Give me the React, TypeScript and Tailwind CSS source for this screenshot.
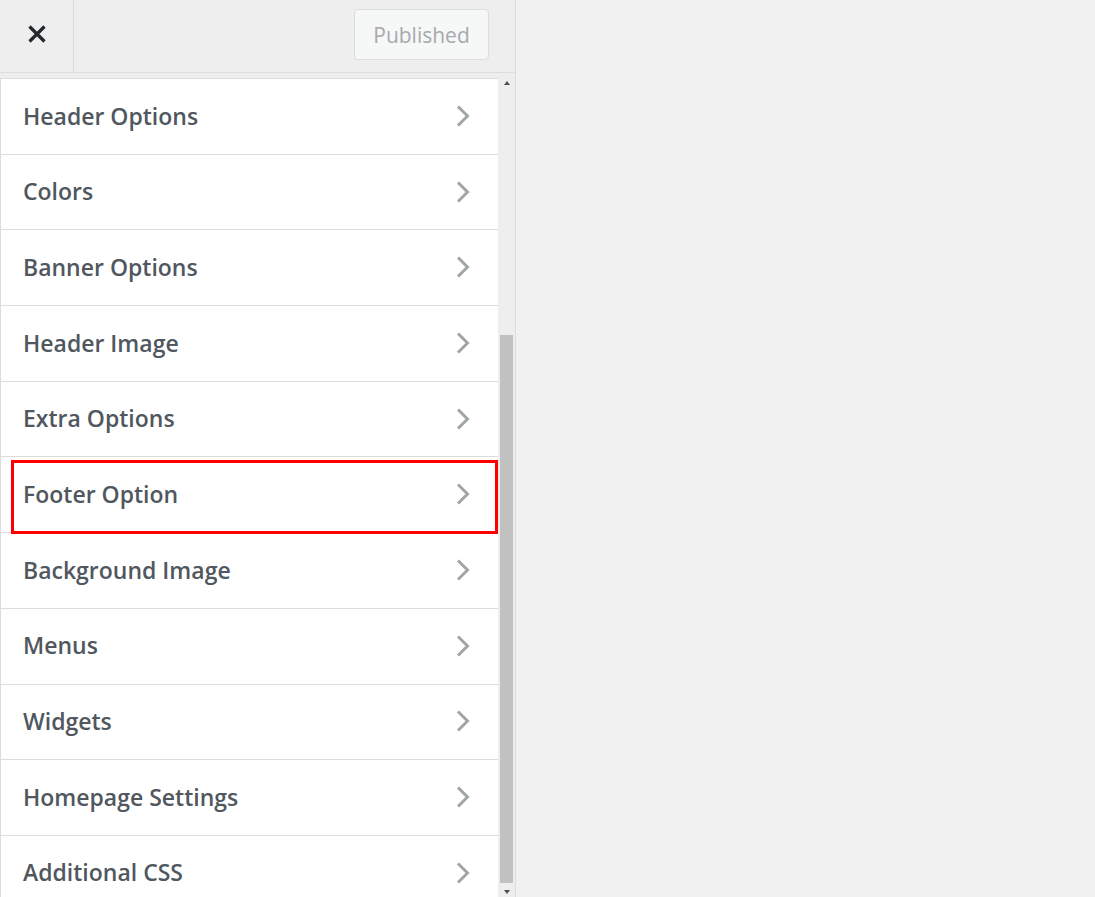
const items = [
  "Header Options",
  "Colors",
  "Banner Options",
  "Header Image",
  "Extra Options",
  "Footer Option",
  "Background Image",
  "Menus",
  "Widgets",
  "Homepage Settings",
  "Additional CSS",
]

function Chevron() {
  return (
    <svg width="16" height="24" viewBox="0 0 16 24" fill="none" className="text-[#a0a5aa]">
      <path d="M3 2.5 L12.5 12 L3 21.5" stroke="currentColor" strokeWidth="3" />
    </svg>
  )
}

export default function App() {
  return (
    <div className="flex h-[897px] w-full overflow-hidden bg-[#f1f1f1] font-['Open_Sans',sans-serif]">
      <div className="flex h-full w-[516px] shrink-0 flex-col border-r border-[#dddddd] bg-[#eeeeee]">
        {/* top bar */}
        <div className="flex h-[73px] shrink-0 border-b border-[#dddddd]">
          <button className="flex h-full w-[74px] items-center justify-center border-r border-[#dddddd] pb-[4px] text-[#23282d]">
            <svg width="20" height="20" viewBox="0 0 20 20">
              <path d="M2.5 2.5 L17.5 17.5 M17.5 2.5 L2.5 17.5" stroke="currentColor" strokeWidth="3.2" />
            </svg>
          </button>
          <div className="flex-1" />
          <button className="mr-[26px] mt-[9px] h-[51px] w-[135px] rounded-[4px] border border-[#dddddd] bg-[#f6f7f7] pt-[3px] text-[21px] text-[#a7aaad]">
            Published
          </button>
        </div>

        <div className="mt-[5px] flex min-h-0 flex-1">
          {/* list */}
          <div className="w-[498px] shrink-0 overflow-hidden">
            {items.map((label) => (
              <div
                key={label}
                className="relative flex h-[75.7px] items-center justify-between border-l border-t border-[#dddddd] bg-white pb-[1px] pl-[22px] pr-[27px]"
              >
                <span className="text-[23px] font-semibold text-[#50575e]">{label}</span>
                <Chevron />
                {label === "Footer Option" && (
                  <div className="absolute left-[10px] top-[3px] z-10 h-[74px] w-[487px] border-[3px] border-[#ff0000]" />
                )}
              </div>
            ))}
          </div>

          {/* scrollbar */}
          <div className="flex w-[17px] flex-col items-center">
            <div className="mt-[3px] h-0 w-0 border-x-[3.5px] border-b-[4px] border-x-transparent border-b-[#505050]" />
            <div className="mt-[250px] w-[13px] flex-1 bg-[#c1c1c1]" />
            <div className="mb-[3px] mt-[7px] h-0 w-0 border-x-[3.5px] border-t-[4px] border-x-transparent border-t-[#505050]" />
          </div>
        </div>
      </div>
      <div className="flex-1" />
    </div>
  )
}
